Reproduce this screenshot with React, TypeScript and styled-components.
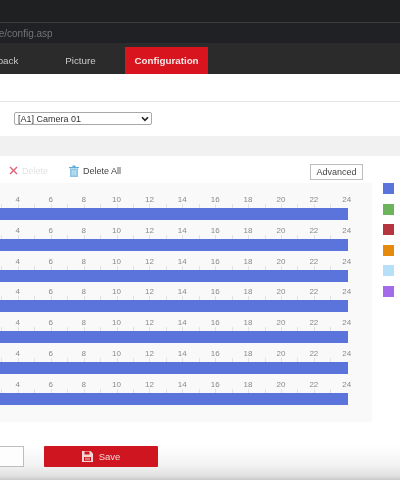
import React from "react";
import styled, { createGlobalStyle } from "styled-components";

const Global = createGlobalStyle`
  html, body { margin: 0; padding: 0; background: #fff; overflow: hidden; }
  body { width: 400px; height: 480px; font-family: "Liberation Sans", Arial, sans-serif; }
`;
const Page = styled.div`
  width: 400px; height: 480px; overflow: hidden; display: flex; flex-direction: column;
  filter: blur(0.55px);
  background: #fff;
`;
const TopBar = styled.div`height: 22px; background: #1f2022; border-bottom: 1px solid #3a3b3d;`;
const AddressBar = styled.div`
  height: 20px; background: #202124; display: flex; align-items: center; overflow: hidden;
  border-bottom: 1px solid #2c2c2e;
`;
const AddressText = styled.span`font-size: 10px; color: #727375; margin-left: -18px; white-space: nowrap;`;
const Nav = styled.nav`
  height: 30px; background: #2b2b2b; display: flex; align-items: flex-end; overflow: hidden; flex: none;
`;
const NavItem = styled.div<{ $w: number; $active?: boolean }>`
  width: ${p => p.$w}px; flex: none; height: 27px; display: flex; align-items: center; justify-content: center;
  font-size: 9.8px; white-space: nowrap;
  color: ${p => (p.$active ? "#f6e5e5" : "#c9c9c9")};
  font-weight: ${p => (p.$active ? 700 : 400)};
  background: ${p => (p.$active ? "#d8141f" : "transparent")};
  padding-bottom: 1px; box-sizing: border-box;
`;
const NavShift = styled.div`width: 0; margin-left: -39px; flex: none;`;
const Spacer = styled.div`height: 27px; border-bottom: 1px solid #e4e4e4; flex: none;`;
const CameraRow = styled.div`height: 34px; display: flex; align-items: center; padding: 0 0 1px 14px; box-sizing: border-box; flex: none;`;
const CameraSelect = styled.div`
  width: 138px; height: 13px; box-sizing: border-box; border: 1px solid #a8a8a8; border-radius: 2px;
  display: flex; align-items: center; justify-content: space-between; padding: 0 2px 0 3px;
  font-size: 9px; color: #333;
`;
const Divider = styled.div`height: 20px; background: #f1f1f1; flex: none;`;
const Toolbar = styled.div`
  height: 27px; flex: none; display: flex; align-items: center; position: relative; padding: 2px 0 0 9px; box-sizing: border-box;
`;
const ToolAction = styled.div<{ $off?: boolean; $gap: number }>`
  display: flex; align-items: center; gap: 4px; font-size: 9px; margin-right: ${p => p.$gap}px;
  color: ${p => (p.$off ? "#e2e2e2" : "#444")};
`;
const AdvancedButton = styled.div`
  position: absolute; left: 310px; top: 8px; width: 53px; height: 16px; box-sizing: border-box;
  border: 1px solid #bdbdbd; display: flex; align-items: center; justify-content: center;
  font-size: 9px; color: #444; background: #fff;
`;
const Body = styled.div`flex: none; height: 239px; display: flex;`;
const Panel = styled.div`
  width: 372px; flex: none; background: #f9f9f9; overflow: hidden; padding-top: 13px; box-sizing: border-box;
  display: flex; flex-direction: column; gap: 7.8px;
`;
const DayRow = styled.div`display: flex; flex-direction: column; margin-left: -64.4px; width: 428px; height: 23px;`;
const Labels = styled.div`display: flex; height: 8px; flex: none;`;
const Label = styled.span`width: 32.9px; text-align: center; font-size: 8px; line-height: 8px; color: #8a8a8a; flex: none;`;
const Ticks = styled.div`
  height: 4px; flex: none; margin-left: 16.45px; width: 395px;
  background: repeating-linear-gradient(to right, #e2e2e2 0 1px, transparent 1px 16.45px);
`;
const Bar = styled.div`
  height: 12px; flex: none; margin-left: 16.45px; width: 396px; background: #5b74dc;
`;
const Legend = styled.div`
  padding: 0 0 0 383px; margin-left: -372px; display: flex; flex-direction: column; gap: 9.6px; width: 17px; overflow: hidden;
`;
const Swatch = styled.div<{ $c: string }>`width: 11px; height: 11px; background: ${p => p.$c}; flex: none;`;
const Footer = styled.div`
  flex: 1; display: flex; align-items: flex-start; padding-top: 24px; gap: 20px; overflow: hidden;
  background: linear-gradient(to bottom, #fff 0, #fff 40%, #f2f2f2 75%, #e2e2e2 92%, #cacaca 100%);
`;
const GhostButton = styled.div`
  width: 60px; margin-left: -36px; height: 21px; box-sizing: border-box; border: 1px solid #bdbdbd; background: #fdfdfd; flex: none;
`;
const SaveButton = styled.div`
  width: 114px; height: 21px; background: #cf1620; border-radius: 1px; color: #f3d6d6; flex: none;
  display: flex; align-items: center; justify-content: center; gap: 6px; font-size: 9.5px;
`;

const hours = [0, 2, 4, 6, 8, 10, 12, 14, 16, 18, 20, 22, 24];
const days = [0, 1, 2, 3, 4, 5, 6];
const swatches = ["#5b74dc", "#6cb35c", "#b5363f", "#e58a0b", "#b5e0f7", "#a36bea"];

export default function App() {
  return (
    <Page>
      <Global />
      <TopBar />
      <AddressBar><AddressText>page/config.asp</AddressText></AddressBar>
      <Nav>
        <NavShift />
        <NavItem $w={75}>Playback</NavItem>
        <NavItem $w={89}>Picture</NavItem>
        <NavItem $w={83} $active>Configuration</NavItem>
      </Nav>
      <Spacer />
      <CameraRow>
        <CameraSelect>
          <span>[A1] Camera 01</span>
          <svg width="8" height="6" viewBox="0 0 8 6"><path d="M1 1.2 4 4.4 7 1.2" fill="none" stroke="#222" strokeWidth="1.6" /></svg>
        </CameraSelect>
      </CameraRow>
      <Divider />
      <Toolbar>
        <ToolAction $off $gap={21}>
          <svg width="9" height="9" viewBox="0 0 9 9"><path d="M1 1 8 8M8 1 1 8" stroke="#e0607a" strokeWidth="1.4" /></svg>
          <span>Delete</span>
        </ToolAction>
        <ToolAction $gap={0}>
          <svg width="10" height="12" viewBox="0 0 10 12">
            <path d="M0 2h10v1.2H0zM3.5 0.5h3V2h-3z" fill="#5ea9d6" />
            <path d="M1 3.6h8V12H1z" fill="#8cc4e6" />
            <path d="M3.2 5v5.5M5 5v5.5M6.8 5v5.5" stroke="#e6f3fb" strokeWidth=".7" />
          </svg>
          <span>Delete All</span>
        </ToolAction>
        <AdvancedButton>Advanced</AdvancedButton>
      </Toolbar>
      <Body>
        <Panel>
          {days.map(d => (
            <DayRow key={d}>
              <Labels>{hours.map(h => <Label key={h}>{h}</Label>)}</Labels>
              <Ticks />
              <Bar />
            </DayRow>
          ))}
        </Panel>
        <Legend>
          {swatches.map(c => <Swatch key={c} $c={c} />)}
        </Legend>
      </Body>
      <Footer>
        <GhostButton />
        <SaveButton>
          <svg width="11" height="11" viewBox="0 0 11 11">
            <path d="M0 0h8.5L11 2.5V11H0z" fill="#f3d6d6" />
            <path d="M2.5 0.5h5V3.5h-5z" fill="#cf1620" />
            <path d="M2 6h7v4H2z" fill="#cf1620" />
            <path d="M3 7.2h5M3 8.8h5" stroke="#f3d6d6" strokeWidth=".7" />
          </svg>
          <span>Save</span>
        </SaveButton>
      </Footer>
    </Page>
  );
}
